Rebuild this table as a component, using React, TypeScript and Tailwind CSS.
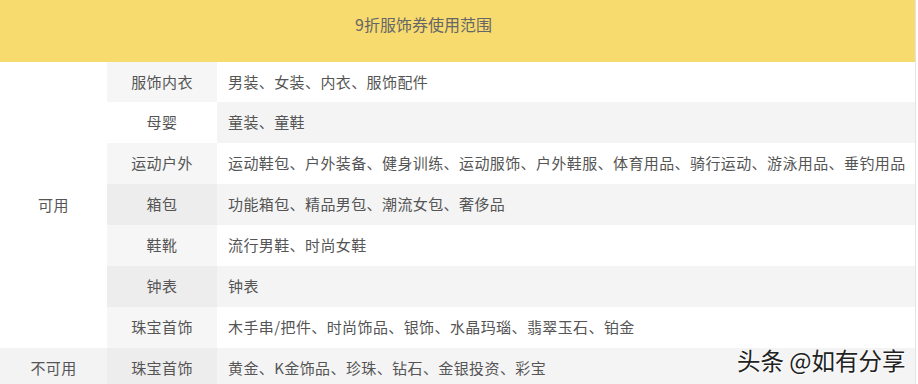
const rows = [
  { name: "服饰内衣", items: "男装、女装、内衣、服饰配件", nameBg: "bg-[#f6f6f6]", itemBg: "bg-white" },
  { name: "母婴", items: "童装、童鞋", nameBg: "bg-white", itemBg: "bg-[#f4f4f4]" },
  {
    name: "运动户外",
    items: "运动鞋包、户外装备、健身训练、运动服饰、户外鞋服、体育用品、骑行运动、游泳用品、垂钓用品",
    nameBg: "bg-[#f6f6f6]",
    itemBg: "bg-white",
  },
  { name: "箱包", items: "功能箱包、精品男包、潮流女包、奢侈品", nameBg: "bg-[#ededed]", itemBg: "bg-[#f4f4f4]" },
  { name: "鞋靴", items: "流行男鞋、时尚女鞋", nameBg: "bg-[#f6f6f6]", itemBg: "bg-white" },
  { name: "钟表", items: "钟表", nameBg: "bg-[#ededed]", itemBg: "bg-[#f4f4f4]" },
  {
    name: "珠宝首饰",
    items: "木手串/把件、时尚饰品、银饰、水晶玛瑙、翡翠玉石、铂金",
    nameBg: "bg-[#f6f6f6]",
    itemBg: "bg-white",
  },
];

export default function App() {
  return (
    <div
      className="relative flex h-[384px] w-[918px] overflow-hidden bg-white text-[15px] tracking-[0.4px] text-[#555]"
      style={{ fontFamily: '"Microsoft YaHei", "Noto Sans CJK SC", sans-serif' }}
    >
      <div className="w-[915px] shrink-0">
        {/* Header */}
        <div className="h-[62px] bg-[#f7db6f] pl-[355px] pt-[12px] text-[16px] tracking-normal text-[#666]">
          9折服饰券使用范围
        </div>

        {/* Table */}
        <div className="grid grid-cols-[107px_110px_1fr] grid-rows-[40px_41px_41px_41px_41px_41px_41px_41px]">
          <div className="row-span-7 flex items-center justify-center bg-white">可用</div>
          {rows.map((r, i) => (
            <div key={i} className="contents">
              <div className={`flex items-center justify-center ${r.nameBg}`}>{r.name}</div>
              <div className={`flex items-center whitespace-nowrap pl-[11px] ${r.itemBg}`}>{r.items}</div>
            </div>
          ))}
          <div className="flex items-center justify-center bg-[#f3f3f3]">不可用</div>
          <div className="flex items-center justify-center bg-[#ededed]">珠宝首饰</div>
          <div className="flex items-center pl-[11px] bg-[#f4f4f4]">
            黄金、K金饰品、珍珠、钻石、金银投资、彩宝
          </div>
        </div>
      </div>
      <div className="w-px shrink-0 bg-[#e4e4e4]" />

      {/* Watermark */}
      <div
        className="absolute left-[737px] top-[343px] whitespace-nowrap text-[23.5px] tracking-normal text-[#222]"
        style={{ textShadow: "0 0 2px #fff, 1px 1px 1px #fff" }}
      >
        头条 @如有分享
      </div>
    </div>
  );
}
